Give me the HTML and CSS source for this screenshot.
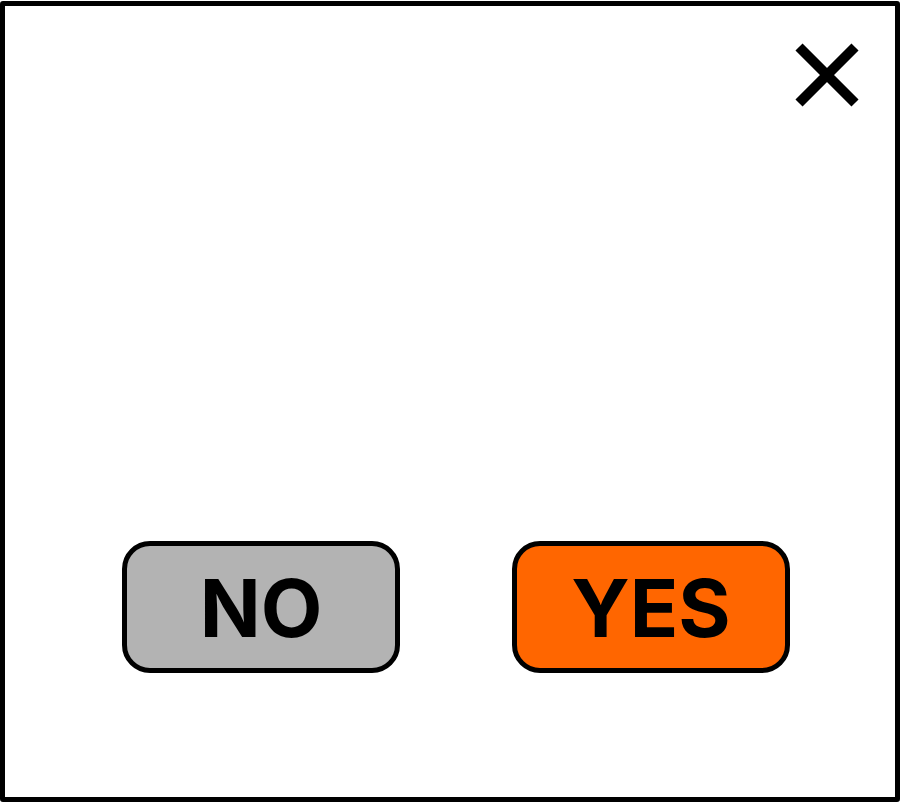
FILE: index.html
```html
<!DOCTYPE html>
<html lang="en">
<head>
<meta charset="utf-8">
<title>Confirm</title>
<link rel="stylesheet" href="styles.css">
</head>
<body>
<main class="dialog" role="dialog" aria-label="Confirm">
  <header class="dialog-header">
    <button class="close" type="button" aria-label="Close">
      <svg class="close-icon" viewBox="0 0 64 64" aria-hidden="true">
        <path d="M4 4L60 60M60 4L4 60" fill="none" stroke="#000" stroke-width="10"/>
      </svg>
    </button>
  </header>
  <footer class="actions">
    <button class="choice choice-no" type="button">NO</button>
    <button class="choice choice-yes" type="button">YES</button>
  </footer>
</main>
</body>
</html>
```
FILE: styles.css
```css
* {
  box-sizing: border-box;
}

body {
  margin: 0;
  padding-top: 1px;
  background: #fff;
  font-family: Inter, "Liberation Sans", sans-serif;
}

.dialog {
  display: flex;
  flex-direction: column;
  justify-content: space-between;
  min-height: calc(100vh - 1px);
  border: 5px solid #000;
  border-radius: 3px;
  background: #fff;
}

.dialog-header {
  display: flex;
  justify-content: flex-end;
  padding: 37px 36px;
}

.close {
  width: 64px;
  height: 64px;
  padding: 0;
  border: 0;
  background: none;
}

.close-icon {
  display: block;
  width: 100%;
  height: 100%;
}

.actions {
  display: flex;
  gap: 112px;
  padding: 0 105px 124px 117px;
}

.choice {
  flex: 1;
  height: 132px;
  padding: 2px 0 0;
  border: 5px solid #000;
  border-radius: 28px;
  color: #000;
  font-family: inherit;
  font-size: 80px;
  font-weight: 700;
  line-height: 100px;
}

.choice-no {
  background: #b3b3b3;
}

.choice-yes {
  background: #ff6600;
}
```
